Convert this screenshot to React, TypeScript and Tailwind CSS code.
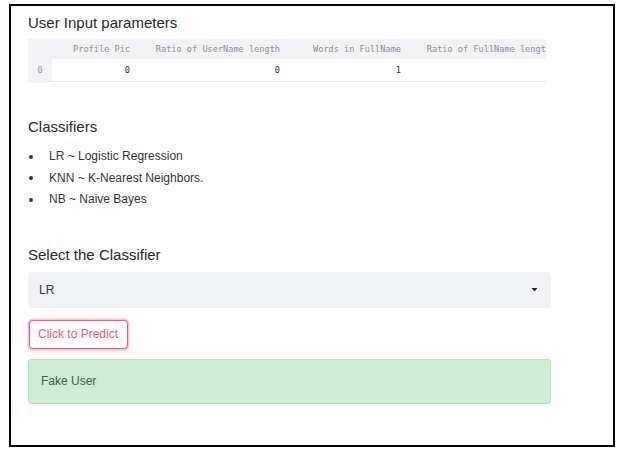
import React from "react";

const cols = [
  { label: "Profile Pic", value: "0", w: "w-[83px]" },
  { label: "Ratio of UserName length", value: "0", w: "w-[150px]" },
  { label: "Words in FullName", value: "1", w: "w-[121px]" },
  { label: "Ratio of FullName length", value: "0", w: "w-[150px]" },
];

export default function App() {
  return (
    <div className="w-[631px] h-[458px] bg-white pl-[9px] pt-[4px]" style={{ fontFamily: '"Liberation Sans", Arial, sans-serif' }}>
      <div className="w-[606px] h-[443px] border-2 border-black pl-[17px] pt-[7px] text-[#31333f]">
        <h2 className="text-[15px] leading-[20px] text-[#262730]">User Input parameters</h2>

        <div className="mt-[6px] w-[518px] overflow-hidden bg-[#f2f3f6] border-b border-[#e8eaee]" style={{ fontFamily: '"DejaVu Sans Mono", "Liberation Mono", monospace' }}>
          <div className="flex w-max text-[8.6px] text-[#8b8f98]">
            <div className="w-[24px] h-[20px]" />
            {cols.map((c) => (
              <div key={c.label} className={`${c.w} h-[20px] flex items-center justify-end pr-[5px] whitespace-nowrap`}>
                {c.label}
              </div>
            ))}
          </div>
          <div className="flex w-max text-[8.6px]">
            <div className="w-[24px] h-[22px] flex items-center justify-center text-[#9a9ea6]">0</div>
            {cols.map((c) => (
              <div key={c.label} className={`${c.w} h-[22px] flex items-center justify-end pr-[5px] bg-white text-[#31333f]`}>
                {c.value}
              </div>
            ))}
          </div>
        </div>

        <h2 className="mt-[35px] text-[15px] leading-[20px] text-[#262730]">Classifiers</h2>
        <ul className="mt-[9px] text-[12px] leading-[21.5px]">
          {["LR ~ Logistic Regression", "KNN ~ K-Nearest Neighbors.", "NB ~ Naive Bayes"].map((t) => (
            <li key={t} className="flex items-center">
              <span className="w-[21px] pl-[1px] flex items-center">
                <span className="block w-[4px] h-[4px] rounded-full bg-[#31333f]" />
              </span>
              <span>{t}</span>
            </li>
          ))}
        </ul>

        <h2 className="mt-[34px] text-[15px] leading-[20px] text-[#262730]">Select the Classifier</h2>

        <div className="mt-[7px] w-[523px] h-[36px] bg-[#f0f2f6] rounded-[4px] flex items-center justify-between pl-[11px] pr-[14px] text-[12px]">
          <span>LR</span>
          <svg width="5" height="4" viewBox="0 0 5 4">
            <rect x="0" y="0" width="5" height="1" fill="#262730" />
            <polygon points="0.3,0.8 4.7,0.8 2.5,3.6" fill="#262730" />
          </svg>
        </div>

        <button className="mt-[12px] w-[99px] h-[29px] ml-[0.5px] rounded-[4px] border-[1.5px] border-[#f0587a] text-[#f0587a] text-[12px] bg-white flex items-center justify-center shadow-[0_0_0_1.5px_rgba(240,88,122,0.35)]">
          Click to Predict
        </button>

        <div className="mt-[10px] w-[523px] h-[45px] rounded-[3px] bg-[#cfecd7] border border-[#b6e2c3] flex items-center pl-[12px] text-[12px] text-[#2d6b3c]">
          Fake User
        </div>
      </div>
    </div>
  );
}
